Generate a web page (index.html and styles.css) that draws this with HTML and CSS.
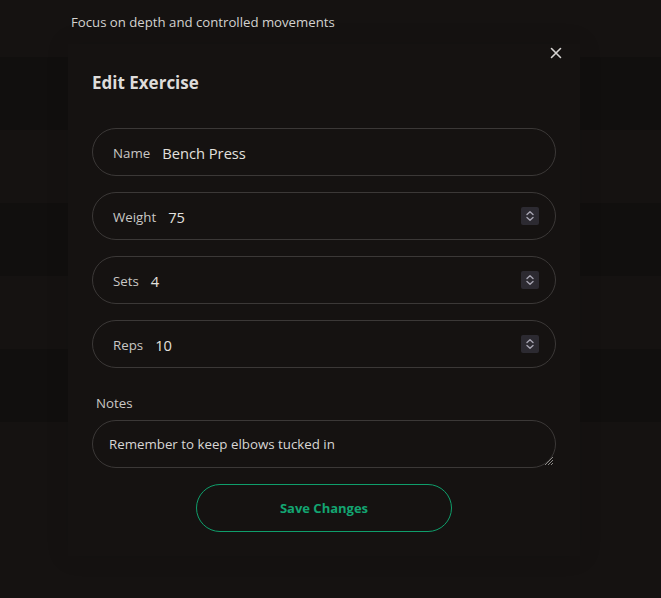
FILE: index.html
```html
<!DOCTYPE html>
<html>
<head>
<meta charset="utf-8">
<link rel="stylesheet" href="styles.css">
</head>
<body>
<div class="page">
  <p class="desc">Focus on depth and controlled movements</p>
  <div class="rows">
    <div class="row dark"></div>
    <div class="row"></div>
    <div class="row dark"></div>
    <div class="row"></div>
    <div class="row dark"></div>
  </div>
</div>
<div class="modal">
  <button class="close" aria-label="Close">
    <svg width="12" height="12" viewBox="0 0 12 12"><path d="M1.5 1.5L10.5 10.5M10.5 1.5L1.5 10.5" stroke="#d6d4d2" stroke-width="1.6" stroke-linecap="round"/></svg>
  </button>
  <h2 class="title">Edit Exercise</h2>
  <div class="fields">
    <div class="field"><span class="label">Name</span><span class="value">Bench Press</span></div>
    <div class="field"><span class="label">Weight</span><span class="value">75</span><span class="spin"><svg width="18" height="18" viewBox="0 0 18 18"><path d="M6 7.5L9 4.8L12 7.5M6 10.5L9 13.2L12 10.5" fill="none" stroke="#a7a5b2" stroke-width="1.4" stroke-linecap="round" stroke-linejoin="round"/></svg></span></div>
    <div class="field"><span class="label">Sets</span><span class="value">4</span><span class="spin"><svg width="18" height="18" viewBox="0 0 18 18"><path d="M6 7.5L9 4.8L12 7.5M6 10.5L9 13.2L12 10.5" fill="none" stroke="#a7a5b2" stroke-width="1.4" stroke-linecap="round" stroke-linejoin="round"/></svg></span></div>
    <div class="field"><span class="label">Reps</span><span class="value">10</span><span class="spin"><svg width="18" height="18" viewBox="0 0 18 18"><path d="M6 7.5L9 4.8L12 7.5M6 10.5L9 13.2L12 10.5" fill="none" stroke="#a7a5b2" stroke-width="1.4" stroke-linecap="round" stroke-linejoin="round"/></svg></span></div>
  </div>
  <div class="notes">
    <div class="notes-label">Notes</div>
    <div class="textarea">Remember to keep elbows tucked in<svg class="grip" width="12" height="12" viewBox="0 0 12 12"><path d="M11 3L3 11M11 6L6 11M11 9L9 11" stroke="#8a8886" stroke-width="1"/></svg></div>
  </div>
  <div class="actions"><button class="save">Save Changes</button></div>
</div>
</body>
</html>
```
FILE: styles.css
```css
* { box-sizing: border-box; }
html, body { margin: 0; padding: 0; }
body {
  background: #151211;
  width: 661px;
  height: 598px;
  overflow: hidden;
  position: relative;
  font-family: "Open Sans", "Noto Sans", sans-serif;
  color: #dcdad8;
}
.page { padding-top: 12px; }
.desc {
  margin: 0 0 0 71px;
  font-size: 13.2px;
  line-height: 20px;
  color: #d4d2d0;
}
.rows { margin-top: 25px; display: flex; flex-direction: column; }
.row { height: 73px; }
.row.dark { background: #110f0e; }
.modal {
  position: absolute;
  left: 68px;
  top: 44px;
  width: 512px;
  padding: 24px;
  background: #151211;
  box-shadow: 0 0 20px 2px rgba(0,0,0,0.1);
  display: flex;
  flex-direction: column;
}
.close {
  position: absolute;
  right: 17px;
  top: 2px;
  width: 14px;
  height: 14px;
  padding: 0;
  border: 0;
  background: none;
  display: flex;
  align-items: center;
  justify-content: center;
}
.title {
  margin: 0;
  padding-top: 1px;
  font-size: 17px;
  line-height: 27px;
  font-weight: 700;
  color: #dedcda;
}
.fields {
  margin-top: 32px;
  display: flex;
  flex-direction: column;
  gap: 16px;
}
.field {
  height: 48px;
  border: 1px solid #3b3837;
  border-radius: 24px;
  display: flex;
  align-items: center;
  padding: 1px 16px 0 20px;
}
.label {
  font-size: 13.3px;
  color: #c9c7c5;
  margin-right: 12px;
}
.value {
  font-size: 14.7px;
  color: #e2e0de;
  flex: 1;
}
.spin {
  width: 18px;
  height: 18px;
  background: #2c2a31;
  border-radius: 2px;
  display: flex;
  margin-top: -1px;
}
.notes { margin-top: 24px; }
.notes-label {
  font-size: 13.3px;
  line-height: 20px;
  color: #c9c7c5;
  padding-left: 4px;
  padding-top: 1px;
  margin-bottom: -1px;
}
.textarea {
  margin-top: 8px;
  height: 48px;
  border: 1px solid #3b3837;
  border-radius: 24px;
  padding: 0 16px;
  display: flex;
  align-items: center;
  font-size: 13.3px;
  color: #d8d6d4;
  position: relative;
}
.grip { position: absolute; right: 1px; bottom: 1px; }
.actions {
  margin-top: 16px;
  display: flex;
  justify-content: center;
}
.save {
  width: 256px;
  height: 48px;
  border: 1px solid #0f9e6b;
  border-radius: 24px;
  background: transparent;
  color: #13a571;
  font-family: "Open Sans", "Noto Sans", sans-serif;
  font-size: 13px;
  font-weight: 700;
  padding-top: 1px;
}
```
